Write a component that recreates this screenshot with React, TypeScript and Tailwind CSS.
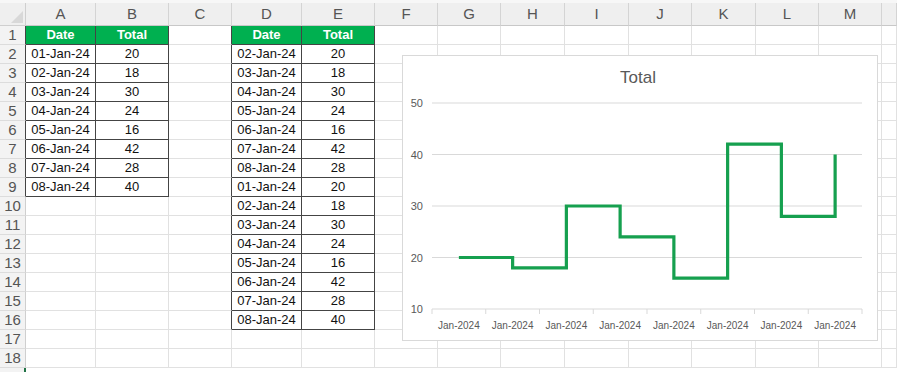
import React from "react";

const COLS = [
    { l: "A", w: "w-[70px]" },
    { l: "B", w: "w-[73px]" },
    { l: "C", w: "w-[63px]" },
    { l: "D", w: "w-[70px]" },
    { l: "E", w: "w-[73px]" },
    { l: "F", w: "w-[63px]" },
    { l: "G", w: "w-[63px]" },
    { l: "H", w: "w-[64px]" },
    { l: "I", w: "w-[64px]" },
    { l: "J", w: "w-[63px]" },
    { l: "K", w: "w-[64px]" },
    { l: "L", w: "w-[63px]" },
    { l: "M", w: "w-[63px]" },
    { l: "", w: "flex-1" },
];

const TOTALS = [20, 18, 30, 24, 16, 42, 28, 40];
const day = (i: number) => `0${i + 1}-Jan-24`;

// left table: A1:B9, right table: D1:E16 (02-Jan..08-Jan keep the first seven totals, then a full run)
const rightRows = [
    ...TOTALS.slice(0, 7).map((t, i) => [day(i + 1), t] as const),
    ...TOTALS.map((t, i) => [day(i), t] as const),
];

function inTable(r: number, c: number) {
    if ((c === 0 || c === 1) && r >= 1 && r <= 9) return true;
    if ((c === 3 || c === 4) && r >= 1 && r <= 16) return true;
    return false;
}

function cellText(r: number, c: number): string | null {
    if (r === 1 && (c === 0 || c === 3)) return "Date";
    if (r === 1 && (c === 1 || c === 4)) return "Total";
    if (r >= 2 && r <= 9 && c === 0) return day(r - 2);
    if (r >= 2 && r <= 9 && c === 1) return String(TOTALS[r - 2]);
    if (r >= 2 && r <= 16 && c === 3) return rightRows[r - 2][0];
    if (r >= 2 && r <= 16 && c === 4) return String(rightRows[r - 2][1]);
    return null;
}

const ROWS = Array.from({ length: 18 }, (_, i) => i + 1);

// chart geometry, local to the chart's inner box
const X0 = 29;
const STEP = 53.75;
const AXIS = 253;
const yOf = (v: number) => AXIS - (v - 10) * 5.15;
const cx = (i: number) => X0 + STEP * (i + 0.5);

function stepPath() {
    let d = `M ${cx(0)} ${yOf(TOTALS[0])}`;
    for (let i = 1; i < TOTALS.length; i++) {
        d += ` H ${cx(i)} V ${yOf(TOTALS[i])}`;
    }
    return d;
}

function Chart() {
    return (
        <div className="absolute left-[402px] top-[55px] w-[476px] h-[286px] border border-[#d9d9d9] bg-white">
            <svg width="474" height="284" className="block" style={{ fontFamily: '"Liberation Sans", Arial, sans-serif' }}>
                <text x="235" y="27" textAnchor="middle" fontSize="17" fill="#595959">
                    Total
                </text>
                {[50, 40, 30, 20, 10].map((v) => (
                    <g key={v}>
                        <line x1={X0} x2={X0 + STEP * 8} y1={yOf(v)} y2={yOf(v)} stroke="#d9d9d9" strokeWidth="1" />
                        <text x="20" y={yOf(v) + 4} textAnchor="end" fontSize="11" fill="#595959">
                            {v}
                        </text>
                    </g>
                ))}
                {Array.from({ length: 9 }, (_, k) => (
                    <line key={k} x1={X0 + STEP * k} x2={X0 + STEP * k} y1={AXIS} y2={AXIS + 5} stroke="#d9d9d9" />
                ))}
                {TOTALS.map((_, i) => (
                    <text key={i} x={cx(i)} y="272.5" textAnchor="middle" fontSize="10" fill="#595959">
                        Jan-2024
                    </text>
                ))}
                <path d={stepPath()} fill="none" stroke="#16a04f" strokeWidth="3.2" strokeLinejoin="miter" />
            </svg>
        </div>
    );
}

export default function App() {
    return (
        <div className="relative w-[897px] h-[372px] overflow-hidden bg-white font-['Liberation_Sans',Arial,sans-serif]">
            {/* column headers */}
            <div className="flex h-[26px] bg-[#efefef] border-t-[3px] border-t-[#f7f7f7]">
                <div className="w-[26px] shrink-0 relative border-r border-b border-[#cfcfcf]">
                    <svg width="12" height="12" className="absolute right-[2px] bottom-[2px]">
                        <polygon points="12,0 12,12 0,12" fill="#d8d8d8" />
                    </svg>
                </div>
                {COLS.map((c, i) => (
                    <div
                        key={i}
                        className={`${c.w} shrink-0 flex items-center justify-center border-r border-b border-[#d4d4d4] border-b-[#c8c8c8] text-[15px] text-[#555]`}
                    >
                        {c.l}
                    </div>
                ))}
            </div>

            {ROWS.map((r) => (
                <div key={r} className="flex h-[19px]">
                    <div
                        className={`w-[26px] shrink-0 flex items-center justify-center bg-[#f3f3f3] border-b border-b-[#dcdcdc] border-r text-[15px] text-[#555] ${
                            inTable(r, 0) ? "border-r-[#444]" : "border-r-[#cfcfcf]"
                        }`}
                    >
                        {r}
                    </div>
                    {COLS.map((c, ci) => {
                        const txt = cellText(r, ci);
                        const head = r === 1 && inTable(r, ci);
                        const darkR = inTable(r, ci) || inTable(r, ci + 1);
                        const darkB = inTable(r, ci) || inTable(r + 1, ci);
                        return (
                            <div
                                key={ci}
                                className={`${c.w} shrink-0 flex items-center justify-center border-r border-b text-[13px] ${
                                    darkR ? "border-r-[#444]" : "border-r-[#e1e1e1]"
                                } ${darkB ? "border-b-[#444]" : "border-b-[#e1e1e1]"} ${
                                    head ? "bg-[#00b050] text-white font-bold" : "text-[#111]"
                                }`}
                            >
                                {txt}
                            </div>
                        );
                    })}
                </div>
            ))}

            <div className="flex h-[4px]">
                <div className="w-[26px] shrink-0 bg-[#f3f3f3] border-r-2 border-r-[#217346]" />
            </div>

            <Chart />
        </div>
    );
}
